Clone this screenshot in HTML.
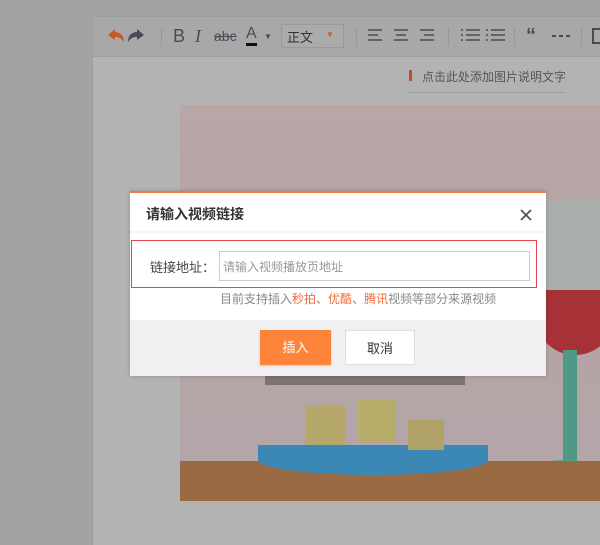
<!DOCTYPE html>
<html><head><meta charset="utf-8"><style>
*{margin:0;padding:0;box-sizing:border-box}
html,body{overflow:hidden}
body{width:600px;height:545px;background:#a3a3a3;position:relative;font-family:"Liberation Sans","Noto Sans CJK SC",sans-serif}
.abs{position:absolute}
.panel{left:92px;top:16px;width:508px;height:529px;background:#b3b3b3;border-left:1px solid #9d9d9d;border-top:1px solid #9d9d9d}
.tb{left:93px;top:17px;width:507px;height:40px;background:#a8a8a8;border-bottom:1px solid #a0a0a0}
.ic{position:absolute;top:26px;color:#474c55;font-size:18px;line-height:20px}
.sep{position:absolute;top:28px;width:1px;height:18px;background:#979797}
.dlg{left:130px;top:191px;width:416px;height:185px;background:#fff;border-top:2px solid #f07a3c;box-shadow:0 0 4px rgba(0,0,0,.2)}
</style></head><body>
<div class="abs panel"></div>
<div class="abs tb"></div>
<svg class="abs" style="left:106px;top:26px" width="40" height="20"><path d="M2 9 L9 3 L9 6 C14 6 18 9 18 16 C15 12 13 11 9 11 L9 14 Z" fill="#c45a2a"/><path d="M38 9 L31 3 L31 6 C26 6 22 9 22 16 C25 12 27 11 31 11 L31 14 Z" fill="#474c55"/></svg>
<div class="sep" style="left:161px"></div>
<div class="ic" style="left:173px">B</div>
<div class="ic" style="left:195px;font-style:italic;font-family:'Liberation Serif',serif">I</div>
<div class="ic" style="left:214px;font-size:14px;text-decoration:line-through">abc</div>
<div class="ic" style="left:246px;font-size:16px;border-bottom:3px solid #111;line-height:16px;height:20px">A</div>
<div class="ic" style="left:264px;font-size:8px;top:27px">▼</div>
<div class="abs" style="left:281px;top:24px;width:63px;height:24px;border:1px solid #9a9a9a;background:#ababab;font-size:13px;color:#333;padding:2px 5px">正文<span style="position:absolute;left:44px;top:5px;color:#c45a2a;font-size:8px">▼</span></div>
<div class="sep" style="left:356px"></div>
<svg class="abs" style="left:368px;top:27px" width="140" height="18" stroke="#474c55" stroke-width="1.6"><path d="M0 3h14M0 8h10M0 13h14M26 3h14M28 8h10M26 13h14M52 3h14M56 8h10M52 13h14"/><path d="M98 3h14M98 8h14M98 13h14M123 3h14M123 8h14M123 13h14M93 3h2M93 8h2M93 13h2M118 3h2M118 8h2M118 13h2"/></svg>
<div class="sep" style="left:448px"></div>
<div class="sep" style="left:514px"></div>
<div class="ic" style="left:526px;font-weight:bold;font-size:20px">“</div>
<svg class="abs" style="left:552px;top:34px" width="20" height="4"><path d="M0 2h4M7 2h4M14 2h4" stroke="#474c55" stroke-width="2"/></svg>
<div class="sep" style="left:581px"></div>
<div class="abs" style="left:592px;top:28px;width:8px;height:16px;border:2px solid #474c55;border-right:none"></div>
<div class="abs" style="left:409px;top:70px;width:3px;height:11px;background:#c44a2a"></div>
<div class="abs" style="left:422px;top:68px;font-size:12px;color:#555">点击此处添加图片说明文字</div>
<div class="abs" style="left:409px;top:92px;width:156px;height:1px;background:#9e9e9e"></div>
<div class="abs" style="left:180px;top:105px;width:420px;height:396px;background:linear-gradient(#b9a6a6,#b3a3a4 50%,#b5a7aa);overflow:hidden">
 <div class="abs" style="left:365px;top:95px;width:55px;height:130px;background:#a9aeaa"></div>
 <div class="abs" style="left:355px;top:185px;width:80px;height:65px;background:#a63238;border-radius:0 0 40px 40px"></div>
 <div class="abs" style="left:383px;top:245px;width:14px;height:120px;background:#4e9a86"></div>
 <div class="abs" style="left:350px;top:355px;width:70px;height:20px;background:#5aa08c;border-radius:50%"></div>
 <div class="abs" style="left:0;top:356px;width:420px;height:40px;background:#9a6a43"></div>
 <div class="abs" style="left:78px;top:340px;width:230px;height:30px;background:#3b88b5;border-radius:0 0 60% 60%"></div>
 <div class="abs" style="left:125px;top:300px;width:40px;height:40px;background:#b6a86b"></div>
 <div class="abs" style="left:178px;top:295px;width:38px;height:42px;background:#b8ac6a"></div>
 <div class="abs" style="left:228px;top:315px;width:36px;height:30px;background:#b0a266"></div>
 <div class="abs" style="left:85px;top:262px;width:200px;height:18px;background:#5a5050;opacity:.6"></div>
</div>
<div class="abs dlg">
 <div class="abs" style="left:16px;top:11px;font-size:14px;font-weight:bold;color:#333">请输入视频链接</div>
 <svg class="abs" style="left:390px;top:16px" width="12" height="12"><path d="M1 1L11 11M11 1L1 11" stroke="#555" stroke-width="1.8"/></svg>
 <div class="abs" style="left:0;top:38px;width:416px;height:2px;background:#f6f6f6"></div>
 <div class="abs" style="left:1px;top:47px;width:406px;height:48px;border:1px solid #e4444c"></div>
 <div class="abs" style="left:20px;top:64px;font-size:13px;color:#444">链接地址：</div>
 <div class="abs" style="left:89px;top:58px;width:311px;height:30px;border:1px solid #ccc;font-size:12px;color:#999;padding:6px 3px">请输入视频播放页地址</div>
 <div class="abs" style="left:90px;top:97px;font-size:12px;color:#888">目前支持插入<span style="color:#f26a3a">秒拍</span>、<span style="color:#f26a3a">优酷</span>、<span style="color:#f26a3a">腾讯</span>视频等部分来源视频</div>
 <div class="abs" style="left:0;top:127px;width:416px;height:56px;background:#f0f0f2"></div>
 <div class="abs" style="left:130px;top:137px;width:71px;height:35px;background:#fe833b;color:#fff;font-size:13px;text-align:center;line-height:35px;box-shadow:0 1px 2px rgba(0,0,0,.15)">插入</div>
 <div class="abs" style="left:215px;top:137px;width:70px;height:35px;background:#fff;color:#333;font-size:13px;text-align:center;line-height:35px;border:1px solid #ddd">取消</div>
</div>
</body></html>
